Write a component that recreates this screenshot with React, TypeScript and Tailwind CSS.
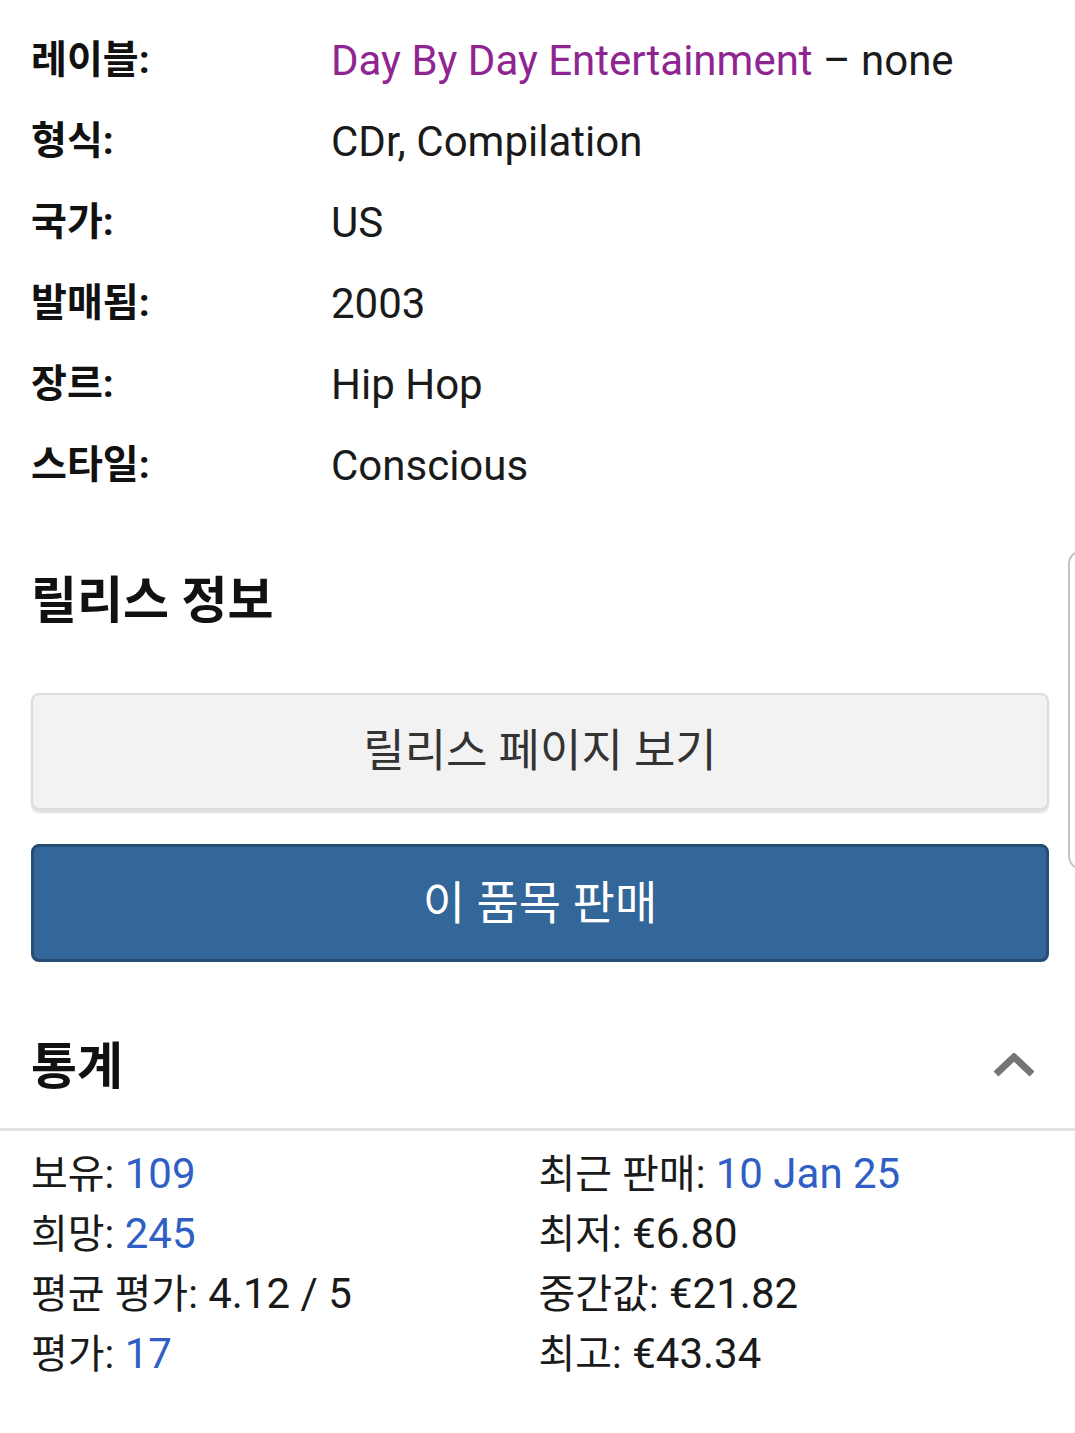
import { ReactNode } from 'react'

const font = { fontFamily: 'Roboto, "Noto Sans CJK KR", sans-serif' }

function InfoRow({ label, children }: { label: string; children: ReactNode }) {
  return (
    <div className="grid h-[81px] grid-cols-[300px_1fr] items-center">
      <span className="text-[39px] font-bold text-[#111]">{label}</span>
      <span className="text-[42px] text-[#1a1a1a]">{children}</span>
    </div>
  )
}

function Stat({ label, value, link }: { label: string; value: string; link?: boolean }) {
  return (
    <div className="h-[60px] text-[42px] leading-[60px] text-[#1a1a1a]">
      <span className="text-[40px]">{label}:</span>{' '}
      <span className={link ? 'text-[#2f5fc4]' : ''}>{value}</span>
    </div>
  )
}

export default function App() {
  return (
    <div className="relative min-h-[1433px] w-full overflow-hidden bg-white" style={font}>
      {/* scroll handle peeking in from the right edge */}
      <div className="absolute left-[1068px] top-[550px] h-[320px] w-[40px] rounded-[14px] border-2 border-[#c4c4c4] bg-white" />

      <div className="px-[31px] pt-[20px]">
        <InfoRow label="레이블:">
          <span className="text-[#8e2590]">Day By Day Entertainment</span> – none
        </InfoRow>
        <InfoRow label="형식:">CDr, Compilation</InfoRow>
        <InfoRow label="국가:">US</InfoRow>
        <InfoRow label="발매됨:">2003</InfoRow>
        <InfoRow label="장르:">Hip Hop</InfoRow>
        <InfoRow label="스타일:">Conscious</InfoRow>

        <h2 className="mt-[65px] h-[60px] text-[50px] font-bold leading-[60px] text-[#111]">릴리스 정보</h2>

        <div className="mt-[62px] mr-[-5px] flex flex-col gap-[34px]">
          <button className="flex h-[117px] items-center justify-center rounded-[8px] border-2 border-[#dcdcdc] bg-[#f2f2f2] text-[45px] text-[#333] shadow-[0_3px_2px_rgba(0,0,0,0.12)]">
            릴리스 페이지 보기
          </button>
          <button className="flex h-[118px] items-center justify-center rounded-[8px] border-[3px] border-[#264d74] bg-[#336699] text-[46px] text-white">
            이 품목 판매
          </button>
        </div>

        <div className="mt-[65px] flex h-[80px] items-center justify-between pr-[10px]">
          <h2 className="text-[50px] font-bold text-[#111]">통계</h2>
          <svg width="40" height="24" viewBox="0 0 40 24" className="mt-[-4px]">
            <polyline points="2,21 20,4 38,21" fill="none" stroke="#757575" strokeWidth="7" />
          </svg>
        </div>
      </div>

      <div className="mt-[21px] h-[3px] w-full bg-[#e2e2e2]" />

      <div className="grid grid-cols-2 px-[31px] pt-[13px]">
        <div>
          <Stat label="보유" value="109" link />
          <Stat label="희망" value="245" link />
          <Stat label="평균 평가" value="4.12 / 5" />
          <Stat label="평가" value="17" link />
        </div>
        <div className="pl-[1px]">
          <Stat label="최근 판매" value="10 Jan 25" link />
          <Stat label="최저" value="€6.80" />
          <Stat label="중간값" value="€21.82" />
          <Stat label="최고" value="€43.34" />
        </div>
      </div>
    </div>
  )
}
